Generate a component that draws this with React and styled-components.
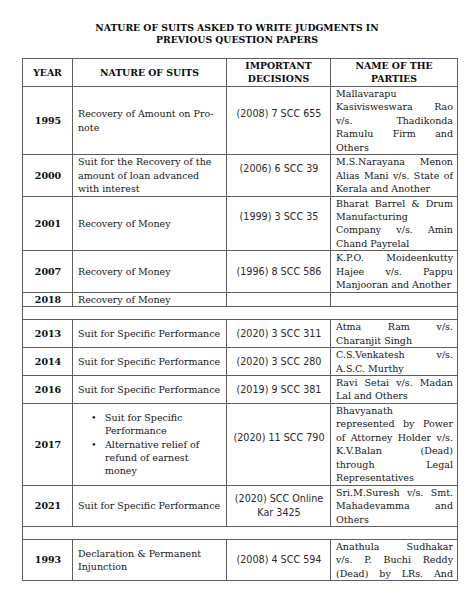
import React from "react";
import styled, { createGlobalStyle } from "styled-components";

const Global = createGlobalStyle`
  html, body { margin: 0; padding: 0; background: #fff; }
  body { font-family: "DejaVu Serif", serif; }
`;

const Page = styled.div`
  width: 474px;
  height: 613px;
  background: #fff;
  padding-top: 22px;
  box-sizing: border-box;
`;

const Title = styled.h1`
  margin: 0 0 12px;
  text-align: center;
  font-family: "DejaVu Serif", serif;
  font-weight: bold;
  font-size: 9.25px;
  line-height: 12px;
  color: #0a0a0a;
`;

const Table = styled.table`
  margin-left: 22px;
  width: 436px;
  border-collapse: collapse;
  table-layout: fixed;
  font-family: "DejaVu Serif", serif;
  font-size: 9.5px;
  line-height: 13.45px;
  color: #161616;
`;

const Th = styled.th`
  border: 1px solid #5e5e5e;
  font-weight: bold;
  font-size: 9.3px;
  text-align: center;
  vertical-align: middle;
  color: #0a0a0a;
  padding: 0 4px;
  height: 26px;
`;

const Td = styled.td`
  border: 1px solid #5e5e5e;
  padding: 0 4px 0 5px;
  vertical-align: middle;
  text-align: left;
  white-space: nowrap;
`;

const Year = styled(Td)`
  text-align: center;
  font-weight: bold;
  color: #0a0a0a;
`;

const Decision = styled(Td)`
  text-align: center;
  font-family: "DejaVu Sans", sans-serif;
  font-size: 9.6px;
  color: #2a2a2a;
  padding-bottom: ${(p) => (p.$lift ? "13.45px" : "0")};
`;

const Line = styled.span`
  display: block;
  white-space: normal;
  text-align: ${(p) => (p.$j ? "justify" : "left")};
  text-align-last: ${(p) => (p.$j ? "justify" : "left")};
`;

const Spacer = styled.td`
  border: 1px solid #5e5e5e;
  height: 12px;
  padding: 0;
`;

const Bullets = styled.ul`
  margin: 0;
  padding: 0 0 0 13px;
  list-style: none;
`;

const Item = styled.li`
  display: grid;
  grid-template-columns: 14px 1fr;
  &::before {
    content: "•";
  }
`;

const rows = [
  { year: "1995", suit: ["Recovery of Amount on Pro-", "note"], dec: ["(2008) 7 SCC 655"], lift: true,
    parties: [["Mallavarapu"], ["Kasivisweswara Rao", 1], ["v/s. Thadikonda", 1], ["Ramulu Firm and", 1], ["Others"]] },
  { year: "2000", suit: ["Suit for the Recovery of the", "amount of loan advanced", "with interest"], dec: ["(2006) 6 SCC 39"], lift: true,
    parties: [["M.S.Narayana Menon", 1], ["Alias Mani v/s. State of", 1], ["Kerala and Another"]] },
  { year: "2001", suit: ["Recovery of Money"], dec: ["(1999) 3 SCC 35"], lift: true,
    parties: [["Bharat Barrel & Drum", 1], ["Manufacturing"], ["Company v/s. Amin", 1], ["Chand Payrelal"]] },
  { year: "2007", suit: ["Recovery of Money"], dec: ["(1996) 8 SCC 586"],
    parties: [["K.P.O. Moideenkutty", 1], ["Hajee v/s. Pappu", 1], ["Manjooran and Another"]] },
  { year: "2018", suit: ["Recovery of Money"], dec: [], parties: [] },
  { spacer: true },
  { year: "2013", suit: ["Suit for Specific Performance"], dec: ["(2020) 3 SCC 311"],
    parties: [["Atma Ram v/s.", 1], ["Charanjit Singh"]] },
  { year: "2014", suit: ["Suit for Specific Performance"], dec: ["(2020) 3 SCC 280"],
    parties: [["C.S.Venkatesh v/s.", 1], ["A.S.C. Murthy"]] },
  { year: "2016", suit: ["Suit for Specific Performance"], dec: ["(2019) 9 SCC 381"],
    parties: [["Ravi Setai v/s. Madan", 1], ["Lal and Others"]] },
  { year: "2017", bullets: [["Suit for Specific", "Performance"], ["Alternative relief of", "refund of earnest", "money"]], dec: ["(2020) 11 SCC 790"], lift: true,
    parties: [["Bhavyanath"], ["represented by Power", 1], ["of Attorney Holder v/s.", 1], ["K.V.Balan (Dead)", 1], ["through Legal", 1], ["Representatives"]] },
  { year: "2021", suit: ["Suit for Specific Performance"], dec: ["(2020) SCC Online", "Kar 3425"],
    parties: [["Sri.M.Suresh v/s. Smt.", 1], ["Mahadevamma and", 1], ["Others"]] },
  { spacer: true },
  { year: "1993", suit: ["Declaration & Permanent", "Injunction"], dec: ["(2008) 4 SCC 594"],
    parties: [["Anathula Sudhakar", 1], ["v/s. P. Buchi Reddy", 1], ["(Dead) by LRs. And", 1]] },
];

export default function App() {
  return (
    <Page>
      <Global />
      <Title>
        NATURE OF SUITS ASKED TO WRITE JUDGMENTS IN
        <br />
        PREVIOUS QUESTION PAPERS
      </Title>
      <Table>
        <colgroup>
          <col style={{ width: 50 }} />
          <col style={{ width: 154 }} />
          <col style={{ width: 104 }} />
          <col style={{ width: 127 }} />
        </colgroup>
        <thead>
          <tr>
            <Th>YEAR</Th>
            <Th>NATURE OF SUITS</Th>
            <Th>IMPORTANT DECISIONS</Th>
            <Th>NAME OF THE PARTIES</Th>
          </tr>
        </thead>
        <tbody>
          {rows.map((r, i) =>
            r.spacer ? (
              <tr key={i}>
                <Spacer colSpan={4} />
              </tr>
            ) : (
              <tr key={i}>
                <Year>{r.year}</Year>
                <Td>
                  {r.bullets ? (
                    <Bullets>
                      {r.bullets.map((b, k) => (
                        <Item key={k}>
                          <span>
                            {b.map((l) => (
                              <Line key={l}>{l}</Line>
                            ))}
                          </span>
                        </Item>
                      ))}
                    </Bullets>
                  ) : (
                    r.suit.map((l) => <Line key={l}>{l}</Line>)
                  )}
                </Td>
                <Decision $lift={r.lift}>
                  {r.dec.map((l) => (
                    <div key={l}>{l}</div>
                  ))}
                </Decision>
                <Td>
                  {r.parties.map(([l, j]) => (
                    <Line key={l} $j={!!j}>
                      {l}
                    </Line>
                  ))}
                </Td>
              </tr>
            )
          )}
        </tbody>
      </Table>
    </Page>
  );
}
